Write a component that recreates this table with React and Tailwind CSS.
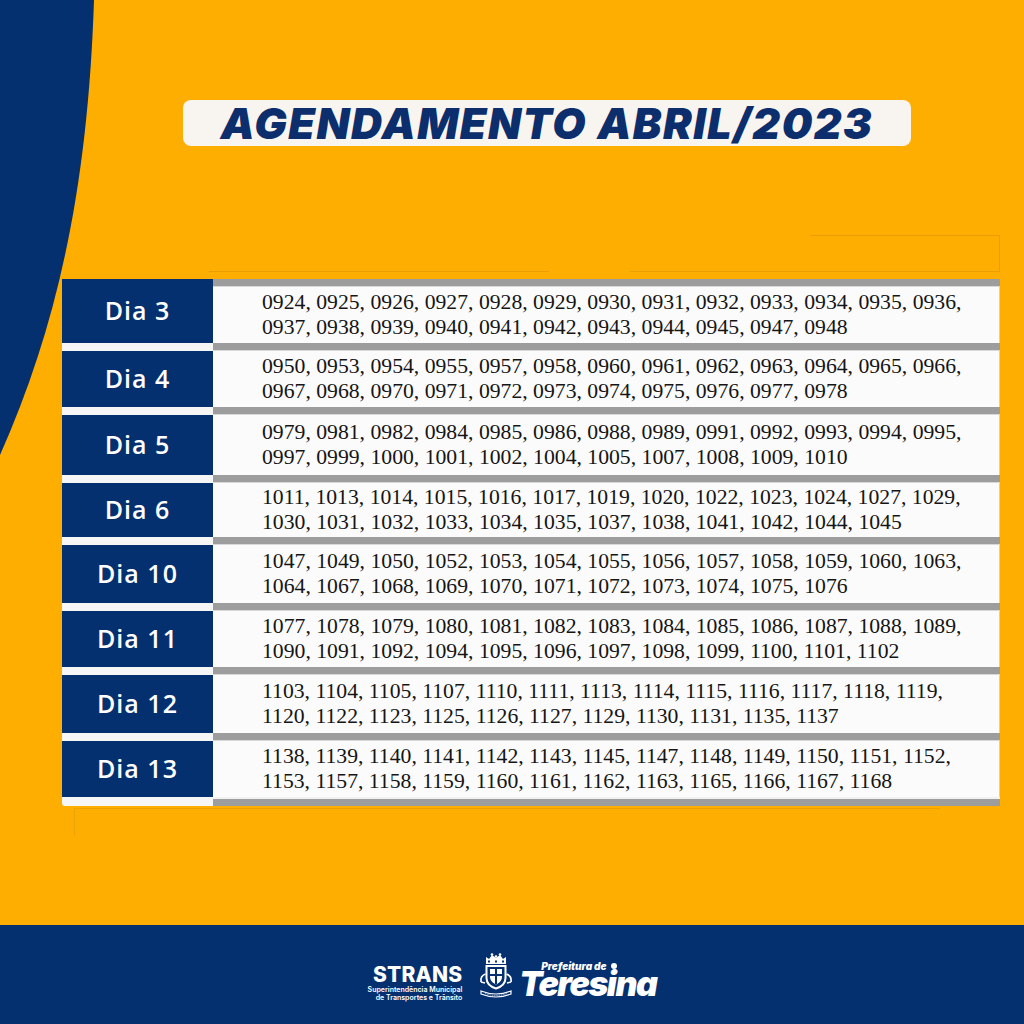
import React from "react";

const rows = [
  { label: "Dia 3", h: "h-[56px]", lines: ["0924, 0925, 0926, 0927, 0928, 0929, 0930, 0931, 0932, 0933, 0934, 0935, 0936,", "0937, 0938, 0939, 0940, 0941, 0942, 0943, 0944, 0945, 0947, 0948"] },
  { label: "Dia 4", h: "h-[56px]", lines: ["0950, 0953, 0954, 0955, 0957, 0958, 0960, 0961, 0962, 0963, 0964, 0965, 0966,", "0967, 0968, 0970, 0971, 0972, 0973, 0974, 0975, 0976, 0977, 0978"] },
  { label: "Dia 5", h: "h-[60px]", lines: ["0979, 0981, 0982, 0984, 0985, 0986, 0988, 0989, 0991, 0992, 0993, 0994, 0995,", "0997, 0999, 1000, 1001, 1002, 1004, 1005, 1007, 1008, 1009, 1010"] },
  { label: "Dia 6", h: "h-[54px]", lines: ["1011, 1013, 1014, 1015, 1016, 1017, 1019, 1020, 1022, 1023, 1024, 1027, 1029,", "1030, 1031, 1032, 1033, 1034, 1035, 1037, 1038, 1041, 1042, 1044, 1045"] },
  { label: "Dia 10", h: "h-[58px]", lines: ["1047, 1049, 1050, 1052, 1053, 1054, 1055, 1056, 1057, 1058, 1059, 1060, 1063,", "1064, 1067, 1068, 1069, 1070, 1071, 1072, 1073, 1074, 1075, 1076"] },
  { label: "Dia 11", h: "h-[56px]", lines: ["1077, 1078, 1079, 1080, 1081, 1082, 1083, 1084, 1085, 1086, 1087, 1088, 1089,", "1090, 1091, 1092, 1094, 1095, 1096, 1097, 1098, 1099, 1100, 1101, 1102"] },
  { label: "Dia 12", h: "h-[58px]", lines: ["1103, 1104, 1105, 1107, 1110, 1111, 1113, 1114, 1115, 1116, 1117, 1118, 1119,", "1120, 1122, 1123, 1125, 1126, 1127, 1129, 1130, 1131, 1135, 1137"] },
  { label: "Dia 13", h: "h-[56px]", lines: ["1138, 1139, 1140, 1141, 1142, 1143, 1145, 1147, 1148, 1149, 1150, 1151, 1152,", "1153, 1157, 1158, 1159, 1160, 1161, 1162, 1163, 1165, 1166, 1167, 1168"] },
];

const labelCls =
  "text-white text-[25px] font-semibold tracking-[0.04em] [font-family:'Open_Sans','Noto_Sans',sans-serif]";

function Row({ row, first }) {
  return (
    <div className="flex">
      <div className="w-[151px] flex flex-col">
        {first ? (
          <div className="h-[64px] bg-[#04306f] flex items-center justify-center">
            <span className={labelCls}>{row.label}</span>
          </div>
        ) : (
          <>
            <div className="h-[8px] bg-[#f6f6f6]" />
            <div className={`${row.h} bg-[#04306f] flex items-center justify-center`}>
              <span className={labelCls}>{row.label}</span>
            </div>
          </>
        )}
      </div>
      <div className="flex-1 flex flex-col">
        <div className="h-[8px] bg-[#9d9d9d] border-b border-[#d8d8d8]" />
        <div
          className={`${row.h} bg-[#fbfbfb] border-r border-[#cfcfcf] pl-[49px] flex flex-col justify-center text-[21.7px] leading-[25px] text-[#151515] [font-family:'Liberation_Serif','Times_New_Roman',serif]`}
        >
          {row.lines.map((l, i) => (
            <div key={i} className="whitespace-nowrap">
              {l}
            </div>
          ))}
        </div>
      </div>
    </div>
  );
}

function Brasao() {
  return (
    <svg width="38" height="46" viewBox="0 0 38 46" fill="none">
      <path d="M9 12 L9 5 L12 7 L15 3 L19 6 L23 3 L26 7 L29 5 L29 12 Z" fill="white" />
      <circle cx="15" cy="2.5" r="1.3" fill="white" />
      <circle cx="19" cy="4.5" r="1.3" fill="white" />
      <circle cx="23" cy="2.5" r="1.3" fill="white" />
      <rect x="11" y="8.5" width="2" height="2" fill="#04306f" />
      <rect x="18" y="8.5" width="2" height="2" fill="#04306f" />
      <rect x="25" y="8.5" width="2" height="2" fill="#04306f" />
      <path d="M9.5 14 H28.5 V26 Q28.5 33.5 19 36.5 Q9.5 33.5 9.5 26 Z" stroke="white" strokeWidth="2" fill="#04306f" />
      <path d="M13 17 H25 V25 Q25 30 19 32.5 Q13 30 13 25 Z" fill="white" />
      <rect x="18" y="17" width="2" height="15" fill="#04306f" />
      <rect x="13" y="22" width="12" height="2" fill="#04306f" />
      <path d="M8.5 22 Q3 24 4 30" stroke="white" strokeWidth="1.6" />
      <path d="M29.5 22 Q35 24 34 30" stroke="white" strokeWidth="1.6" />
      <path d="M4 30 L8 31" stroke="white" strokeWidth="1.4" />
      <path d="M34 30 L30 31" stroke="white" strokeWidth="1.4" />
      <path d="M4 39 Q19 45 34 39 L34 42 Q19 48 4 42 Z" stroke="white" strokeWidth="1.2" fill="#04306f" />
      <path d="M8 41.5 Q19 45.5 30 41.5" stroke="white" strokeWidth="0.7" strokeDasharray="1 0.8" />
    </svg>
  );
}

export default function App() {
  return (
    <div className="relative w-[1024px] h-[1024px] overflow-hidden bg-[#feae00] flex flex-col">
      <svg className="absolute top-0 left-0" width="100" height="460" viewBox="0 0 100 460">
        <path d="M0 0 L94 0 C88 180 60 320 0 455 Z" fill="#04306f" />
      </svg>

      <div className="absolute top-[235px] left-[810px] w-[190px] h-[37px] border-t border-r border-[#e99f00]" />
      <div className="absolute top-[271px] left-[209px] w-[340px] h-px bg-[#e99f00]" />
      <div className="absolute top-[271px] left-[630px] w-[370px] h-px bg-[#e99f00]" />
      <div className="absolute top-[808px] left-[74px] w-[866px] h-[28px] border-t border-l border-[#eaa300]" />

      <div className="relative mt-[100px] ml-[183px] w-[728px] h-[46px] rounded-[8px] bg-[#f8f5f0] flex items-center justify-center">
        <span className="text-[#0c2e6c] text-[43px] leading-none font-black italic tracking-[0.035em] [font-family:Inter,'Noto_Sans',sans-serif]">
          AGENDAMENTO ABRIL/2023
        </span>
      </div>

      <div className="relative mt-[133px] ml-[62px] w-[938px] flex flex-col">
        {rows.map((r, i) => (
          <Row key={r.label} row={r} first={i === 0} />
        ))}
        <div className="flex h-[9px]">
          <div className="w-[151px] bg-[#f6f6f6] rounded-bl-[3px]" />
          <div className="flex-1 flex flex-col">
            <div className="h-[2px] bg-[#f1f1f1]" />
            <div className="flex-1 bg-[#9d9d9d]" />
          </div>
        </div>
      </div>

      <div className="relative mt-auto h-[99px] bg-[#04306f] flex items-start justify-center">
        <div className="mt-[40px] mr-[15px] flex flex-col items-end text-white [font-family:Inter,'Noto_Sans',sans-serif]">
          <div className="text-[21px] leading-[19px] font-extrabold tracking-[0.01em]">STRANS</div>
          <div className="mt-[2px] text-[7px] leading-[8px] font-semibold whitespace-nowrap">Superintendência Municipal</div>
          <div className="text-[7px] leading-[8px] font-semibold whitespace-nowrap">de Transportes e Trânsito</div>
        </div>
        <div className="mt-[27px] mr-[4px]">
          <Brasao />
        </div>
        <div className="mt-[36px] flex flex-col text-white [font-family:Inter,'Noto_Sans',sans-serif]">
          <div className="pl-[22px] flex items-center gap-[4px] text-[10px] leading-[10px] font-black italic whitespace-nowrap">
            <span>Prefeitura de</span>
            <span className="w-[6px] h-[6px] rounded-full bg-white" />
          </div>
          <div className="mt-[-4px] text-[34px] leading-[34px] font-black italic tracking-[-0.045em]">Teresina</div>
        </div>
      </div>
    </div>
  );
}
